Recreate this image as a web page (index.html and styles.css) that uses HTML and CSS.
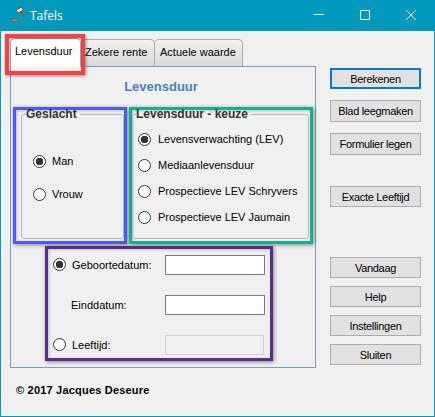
FILE: index.html
```html
<!DOCTYPE html>
<html lang="nl">
<head>
  <meta charset="UTF-8">
  <meta name="viewport" content="width=device-width, initial-scale=1.0">
  <title>Tafels</title>
  <link rel="stylesheet" href="styles.css">
</head>
<body>
  <div class="window">
    <div class="titlebar">
      <svg class="app-icon" width="18" height="16" viewBox="0 0 18 16">
        <path d="M10.500 4.500l4 6" stroke="#8a5a30" stroke-width="1.600" fill="none"/>
        <path d="M6 3.200l5-3 2.500 2.800-5 3z" fill="#f6e2c8" stroke="#5a4030" stroke-width="0.800"/>
        <ellipse cx="4.500" cy="13.200" rx="3.500" ry="1.300" fill="#c09070" stroke="#5a4a40" stroke-width="0.700"/>
      </svg>
      <span class="app-title">Tafels</span>
      <div class="controls">
        <svg width="12" height="12" viewBox="0 0 12 12"><path d="M1 5.500h10" stroke="#fff" fill="none"/></svg>
        <svg width="12" height="12" viewBox="0 0 12 12"><rect x="1.500" y="1.500" width="9" height="9" stroke="#fff" fill="none"/></svg>
        <svg width="12" height="12" viewBox="0 0 12 12"><path d="M1 1l10 10M11 1L1 11" stroke="#fff" fill="none"/></svg>
      </div>
    </div>

    <div class="content">
      <div class="left">
        <div class="tabs">
          <div class="tab active">Levensduur<span class="mark-red"></span></div>
          <div class="tab">Zekere rente</div>
          <div class="tab">Actuele waarde</div>
        </div>
        <div class="panel">
          <h2>Levensduur</h2>
          <div class="groups">
            <div class="mark mark-blue">
              <fieldset class="group group-gender">
                <legend>Geslacht</legend>
                <label class="option"><input type="radio" name="geslacht" checked>Man</label>
                <label class="option"><input type="radio" name="geslacht">Vrouw</label>
              </fieldset>
            </div>
            <div class="mark mark-green">
              <fieldset class="group group-choice">
                <legend>Levensduur - keuze</legend>
                <label class="option"><input type="radio" name="keuze" checked>Levensverwachting (LEV)</label>
                <label class="option"><input type="radio" name="keuze">Mediaanlevensduur</label>
                <label class="option"><input type="radio" name="keuze">Prospectieve LEV Schryvers</label>
                <label class="option"><input type="radio" name="keuze">Prospectieve LEV Jaumain</label>
              </fieldset>
            </div>
          </div>
          <div class="mark mark-purple">
            <div class="date-row">
              <label class="option"><input type="radio" name="datum" checked>Geboortedatum:</label>
              <input class="field" type="text">
            </div>
            <div class="date-row">
              <label class="option plain">Einddatum:</label>
              <input class="field" type="text">
            </div>
            <div class="date-row">
              <label class="option"><input type="radio" name="datum">Leeftijd:</label>
              <input class="field" type="text" disabled>
            </div>
          </div>
        </div>
      </div>

      <div class="buttons">
        <button class="primary">Berekenen</button>
        <button class="tall gap-s">Blad leegmaken</button>
        <button class="tall gap-s">Formulier legen</button>
        <button class="gap-m">Exacte Leeftijd</button>
        <button class="gap-l">Vandaag</button>
        <button class="gap-xs">Help</button>
        <button class="gap-xs">Instellingen</button>
        <button class="gap-xs">Sluiten</button>
      </div>
    </div>

    <div class="copyright">© 2017 Jacques Deseure</div>
  </div>
</body>
</html>
```

FILE: styles.css
```css
* { box-sizing: border-box; }
html, body { margin: 0; padding: 0; }
body { font-family: "Liberation Sans", Arial, sans-serif; font-size: 11px; color: #000; background: #f0f0f0; }

.window { width: 435px; height: 417px; border: 1px solid #0099bc; border-top: 0; background: #f0f0f0; overflow: hidden; }

.titlebar { display: flex; align-items: center; height: 31px; background: #0099bc; color: #fff; padding-left: 9px; }
.app-icon { margin-top: -1px; }
.app-title { font-family: "Open Sans", sans-serif; font-size: 12px; margin-left: 2px; margin-top: -1px; }
.controls { display: flex; margin-left: auto; margin-right: 17px; gap: 34px; margin-top: -2px; }

.content { display: flex; padding: 7px 0 0 9px; }
.left { width: 306px; }

.tabs { display: flex; height: 28px; align-items: flex-end; }
.tab { position: relative; height: 27px; line-height: 25px; padding: 0 5px; border: 1px solid #acacac; border-bottom: 0; border-radius: 5px 5px 0 0; background: linear-gradient(#f2f2f2, #d9d9d9); margin-left: -1px; white-space: nowrap; }
.tab:first-child { margin-left: 0; width: 71px; padding-left: 4px; }
.tab:nth-child(2) { width: 74px; padding-left: 3px; }
.tab:nth-child(3) { width: 89px; }
.tab.active { height: 29px; margin-bottom: -1px; margin-right: 1px; background: #fff; border-color: #8fa8c2; z-index: 2; }
.mark-red { position: absolute; left: -6px; top: -5px; width: 80px; height: 41px; border: 4px solid #ff4040; box-shadow: 1px 1px 3px rgba(0,0,0,.4), inset 1px 1px 2px rgba(0,0,0,.2); }

.panel { width: 306px; height: 302px; border: 1px solid #7f9db9; padding: 0 2px; }
.panel h2 { margin: 0; height: 40px; line-height: 39px; padding-right: 4px; text-align: center; font-size: 13px; font-weight: bold; color: #4f81bd; }

.groups { display: flex; gap: 2px; }
.mark { border: 3px solid; box-shadow: 1px 1px 4px rgba(0,0,0,.45), inset 1px 1px 3px rgba(0,0,0,.2); }
.mark-blue { width: 114px; height: 137px; border-color: #4a5cf5; padding-left: 5px; }
.mark-green { width: 184px; height: 137px; border-color: #10b090; padding-right: 4px; }

.group { height: 129px; margin: 0; padding: 0; border: 1px solid #b4b4b4; border-radius: 3px; display: flex; flex-direction: column; }
.group legend { padding: 0 3px 0 0; font-size: 12px; line-height: 8px; font-weight: bold; color: #333; }
.group-gender { width: 103px; padding: 36px 0 0 11px; gap: 19px; }
.group-gender legend { margin-left: -7px; }
.group-choice { width: 177px; padding: 14px 0 0 5px; gap: 12px; }
.group-choice legend { margin-left: -2px; }
.group-choice .option input { margin-right: 7px; }

.option { display: flex; align-items: center; height: 14px; white-space: nowrap; }
.option input { appearance: none; width: 13px; height: 13px; margin: 0 6px 0 0; border: 1px solid #333; border-radius: 50%; background: #fff; flex: none; }
.option input:checked { background: radial-gradient(circle, #333 0 3.500px, #fff 4px); }

.mark-purple { width: 228px; height: 115px; margin: 2px 0 0 32px; border-color: #5c2d91; padding: 5px 5px 0 5px; display: flex; flex-direction: column; gap: 19px; }
.date-row { display: flex; align-items: center; justify-content: space-between; height: 21px; }
.date-row .plain { padding-left: 18px; }
.field { width: 100px; height: 20px; border: 1px solid #7a7a7a; background: #fff; padding: 0; }
.field:disabled { border-color: #d0d0d0; background: #f0f0f0; width: 99px; margin-right: 1px; }

.buttons { display: flex; flex-direction: column; width: 91px; margin-left: 14px; padding-top: 30px; }
button { height: 21px; padding: 0; font: inherit; letter-spacing: -.3px; color: #000; background: #e1e1e1; border: 1px solid #adadad; }
button.primary { border: 2px solid #0078d7; }
button.tall { height: 22px; }
.gap-xs { margin-top: 8px; }
.gap-s { margin-top: 11px; }
.gap-m { margin-top: 31px; }
.gap-l { margin-top: 50px; }

.copyright { margin: 16px 0 0 15px; font-weight: bold; letter-spacing: .2px; }
```
